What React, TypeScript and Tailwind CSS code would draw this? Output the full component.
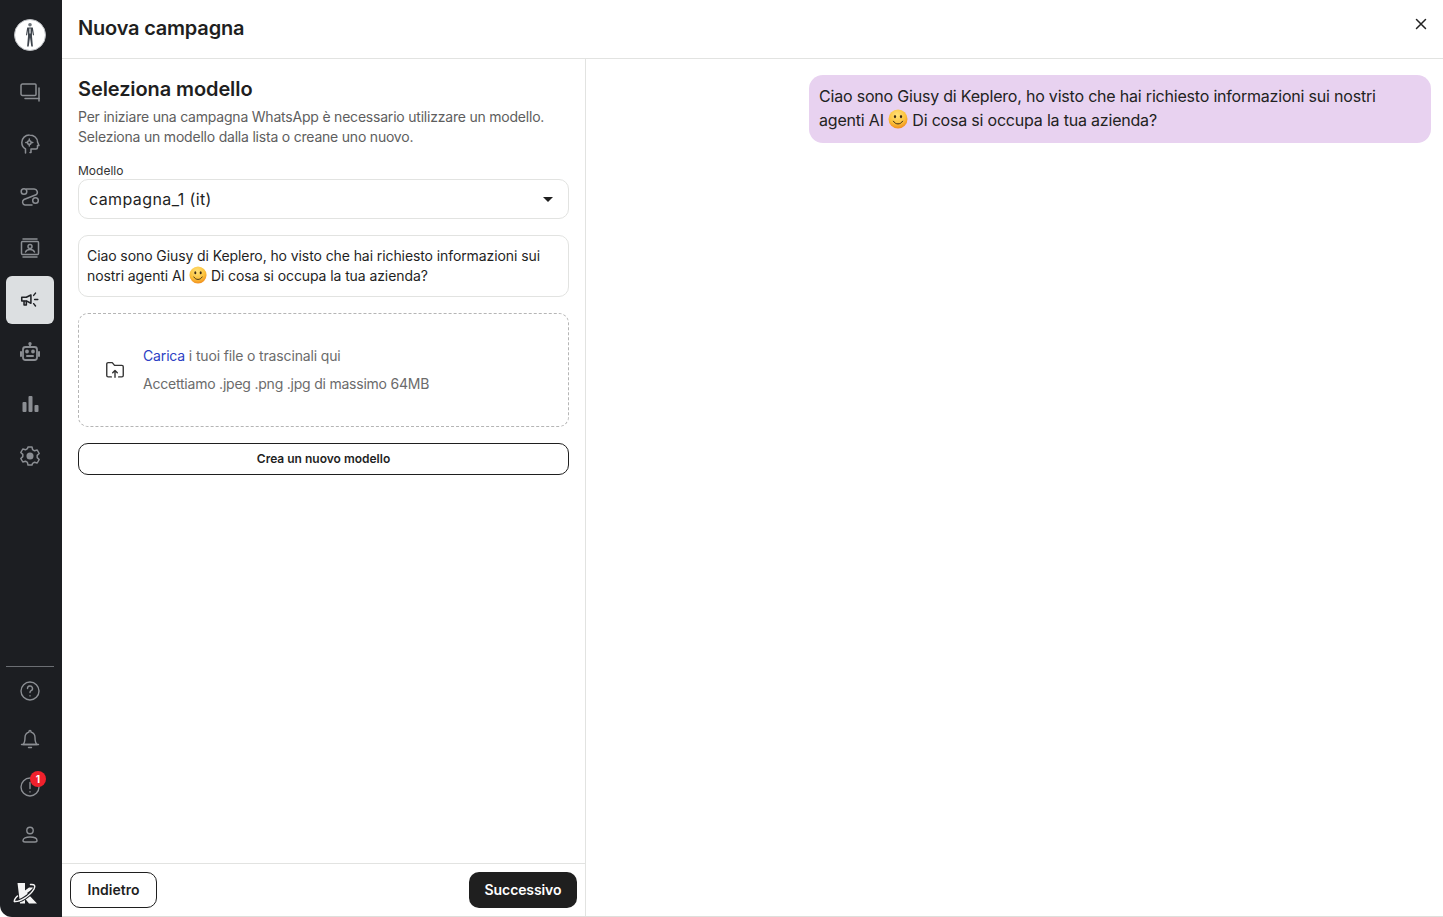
import React from "react";

const Ico = ({ children, size = 24, stroke = "#8b8e93", sw = 1.5 }: { children: React.ReactNode; size?: number; stroke?: string; sw?: number }) => (
  <svg width={size} height={size} viewBox="0 0 24 24" fill="none" stroke={stroke} strokeWidth={sw} strokeLinecap="round" strokeLinejoin="round">
    {children}
  </svg>
);

const Smile = ({ size = 18 }: { size?: number }) => (
  <svg width={size} height={size} viewBox="0 0 20 20" className="inline-block align-[-3px]">
    <defs>
      <radialGradient id="sm" cx="45%" cy="30%" r="75%">
        <stop offset="0%" stopColor="#ffe27a" />
        <stop offset="60%" stopColor="#fcc13a" />
        <stop offset="100%" stopColor="#ee8418" />
      </radialGradient>
    </defs>
    <circle cx="10" cy="10" r="9.5" fill="url(#sm)" />
    <ellipse cx="7" cy="7.6" rx="1.1" ry="1.7" fill="#3b2a14" />
    <ellipse cx="13" cy="7.6" rx="1.1" ry="1.7" fill="#3b2a14" />
    <path d="M5.4 12.2c1.2 1.9 2.8 2.7 4.6 2.7s3.4-.8 4.6-2.7" fill="none" stroke="#3b2a14" strokeWidth="1" strokeLinecap="round" />
  </svg>
);

const SideItem = ({ children, active = false }: { children: React.ReactNode; active?: boolean }) => (
  <div className={`w-12 h-12 flex items-center justify-center rounded-md ${active ? "bg-[#dcdfe1]" : ""}`}>{children}</div>
);

export default function App() {
  return (
    <div className="w-[1443px] h-[917px] flex overflow-hidden bg-white text-[#1f1f1f] font-['Inter','Liberation_Sans',sans-serif]">
      <aside className="w-[62px] h-full shrink-0 bg-[#1c1e22] flex flex-col items-center pr-[2px] rounded-bl-[12px] overflow-hidden">
        <div className="h-[68px] w-full flex items-center justify-center pt-[2px]">
          <div className="w-8 h-8 rounded-full bg-white border border-[#b9bcc0] flex items-center justify-center">
            <svg width="14" height="26" viewBox="0 0 14 26" fill="none">
              <circle cx="7" cy="2.800" r="1.800" fill="#6b7178" />
              <path d="M4.200 5.500h5.600L11 13l-1 .6-.8-5-.2 5.400.9 10.500H8.300L7 15.500 5.700 24.500H4.100L5 14 4.800 8.600l-.8 5-1-.6z" fill="#3f454d" />
              <path d="M6 6.500h2v5H6z" fill="#a6abb0" />
            </svg>
          </div>
        </div>
        <div className="flex flex-col gap-1">
          <SideItem>
            <Ico>
              <path d="M4.500 4h12.500a1 1 0 0 1 1 1v9.500a1 1 0 0 1-1 1H4.500a1.500 1.500 0 0 1-1.500-1.500V5.500A1.500 1.500 0 0 1 4.500 4z" />
              <path d="M7 18.500h14V8" />
              <path d="M21 18.500V21" />
            </Ico>
          </SideItem>
          <SideItem>
            <Ico>
              <path d="M7.500 21v-4C5 15.500 3.800 13 3.800 10.500A7.500 7.500 0 0 1 11.500 3c4.500 0 8 3 8 7l1.500 3.500h-1.500v2a1.500 1.500 0 0 1-1.500 1.500H13v3.500h-1" />
              <circle cx="11.300" cy="10.500" r="1.800" />
              <path d="M11.300 7v1.200M11.300 12.800V14M7.800 10.500H9M13.600 10.500h1.200" />
            </Ico>
          </SideItem>
          <SideItem>
            <Ico>
              <circle cx="6" cy="7.500" r="2.800" />
              <circle cx="17.500" cy="16.500" r="2.800" />
              <path d="M8.500 5h7.500a3.200 3.200 0 0 1 2 5.800L6 15.500a3 3 0 0 0 1 5.500h7" />
            </Ico>
          </SideItem>
          <SideItem>
            <Ico>
              <rect x="3.500" y="5.500" width="17" height="13" rx="1" />
              <path d="M5 3h14M5 21h14" />
              <circle cx="12" cy="10.500" r="2" />
              <path d="M7.500 16c.8-2 2.500-2.500 4.500-2.500s3.700.5 4.500 2.500" />
            </Ico>
          </SideItem>
          <SideItem active>
            <Ico stroke="#202226" size={22}>
              <path d="M3 9h5l5-2.500v9L8 13H3z" strokeWidth="1.700" />
              <path d="M5.500 13.500v4H8v-4" strokeWidth="1.700" />
              <path d="M17 11.500h3.500M16 7l2-2.500M16 16l2 2.500" strokeWidth="1.600" />
            </Ico>
          </SideItem>
          <SideItem>
            <Ico sw={1.8}>
              <rect x="5" y="7" width="14" height="13" rx="2.500" />
              <path d="M12 7V4.500" />
              <circle cx="12" cy="3.800" r="0.800" />
              <path d="M3 12v4M21 12v4M9 16h6" strokeWidth="2" />
              <circle cx="9" cy="11.500" r="1" fill="#8b8e93" />
              <circle cx="15" cy="11.500" r="1" fill="#8b8e93" />
            </Ico>
          </SideItem>
          <SideItem>
            <svg width="24" height="24" viewBox="0 0 24 24" fill="#8b8e93">
              <rect x="4.500" y="10" width="4" height="10" rx="1" />
              <rect x="10.500" y="4" width="4" height="16" rx="1" />
              <rect x="16.500" y="13" width="4" height="7" rx="1" />
            </svg>
          </SideItem>
          <SideItem>
            <Ico>
              <path d="M10 3h4l.6 2.700 1.900 1.100 2.700-.8 2 3.500-2 1.900v2.200l2 1.900-2 3.500-2.700-.8-1.900 1.100L14 21h-4l-.6-2.700-1.900-1.100-2.700.8-2-3.500 2-1.900v-2.200l-2-1.900 2-3.500 2.700.8 1.900-1.100z" />
              <circle cx="12" cy="12" r="2.800" fill="#8b8e93" />
            </Ico>
          </SideItem>
        </div>

        <div className="mt-auto w-12 border-t border-[#6b6e73]" />
        <SideItem>
          <Ico sw={1.4}>
            <circle cx="12" cy="12" r="9" />
            <path d="M9.500 9.500a2.500 2.500 0 1 1 3.600 2.200c-.8.400-1.100 1-1.100 1.800" />
            <path d="M12 16.800v.1" />
          </Ico>
        </SideItem>
        <SideItem>
          <Ico sw={1.4}>
            <path d="M12 3.500a1 1 0 0 1 1 1v.6a5.500 5.500 0 0 1 4 5.400c0 3.500.5 5.500 2 7H5c1.500-1.500 2-3.500 2-7a5.500 5.500 0 0 1 4-5.400v-.6a1 1 0 0 1 1-1z" />
            <path d="M3.500 17.500h17M10.500 20.500h3" />
          </Ico>
        </SideItem>
        <div className="relative">
          <SideItem>
            <Ico sw={1.4}>
              <circle cx="12" cy="12" r="9" />
              <path d="M12 7.500v6M12 16.800v.1" />
            </Ico>
          </SideItem>
          <div className="absolute left-[24px] top-[8px] w-4 h-4 rounded-full bg-[#f0212c] text-white text-[10px] font-bold flex items-center justify-center">1</div>
        </div>
        <SideItem>
          <Ico sw={1.4}>
            <circle cx="12" cy="7.500" r="3.200" />
            <path d="M5 17.500c0-2.200 3-3.500 7-3.500s7 1.300 7 3.500c0 1.200-.8 1.500-2 1.500H7c-1.200 0-2-.3-2-1.500z" />
          </Ico>
        </SideItem>
        <div className="h-[58px] w-full flex items-center justify-center pt-[10px] pr-[8px]">
          <svg width="26" height="24" viewBox="0 0 26 24" fill="none">
            <path d="M4.500 2h7.500v7.500l4-3h5.500L14 12l10 10.500h-8L12 17.500v5H7z" fill="#f4f4f4" />
            <path d="M1.500 20.500C7 21 17 15 21 8c1.500-3 1-5-3.500-4.500" stroke="#1c1e22" strokeWidth="3.400" strokeLinecap="round" />
            <path d="M1.500 20.500C7 21 17 15 21 8c1.500-3 1-5-3.500-4.500" stroke="#f4f4f4" strokeWidth="1.500" strokeLinecap="round" />
            <path d="M1.500 20.500c-.6-1.200 1-3.500 3-5.500" stroke="#f4f4f4" strokeWidth="1.500" strokeLinecap="round" />
          </svg>
        </div>
      </aside>

      <div className="flex-1 min-w-0 flex flex-col border-b border-[#dedfdb]">
        <header className="h-[59px] shrink-0 border-b border-[#e2e3e1] flex items-start justify-between pl-4 pr-[15px]">
          <h1 className="text-[20px] leading-[28px] font-semibold mt-[14px] tracking-[-0.2px]">Nuova campagna</h1>
          <svg width="14" height="14" viewBox="0 0 14 14" fill="none" stroke="#222" strokeWidth="1.500" strokeLinecap="round" className="mt-[17px]">
            <path d="M2.500 2.500l9 9M11.500 2.500l-9 9" />
          </svg>
        </header>
        <div className="flex-1 min-h-0 flex">
          <section className="w-[524px] shrink-0 border-r border-[#e2e3e1] flex flex-col">
            <div className="flex-1 px-4 pt-[17px]">
              <h2 className="text-[20px] leading-[26px] font-semibold tracking-[-0.1px]">Seleziona modello</h2>
              <p className="text-[14px] leading-[20px] text-[#5e5e5e] mt-[5px] tracking-[-0.21px]">
                Per iniziare una campagna WhatsApp è necessario utilizzare un modello.
                <br />
                Seleziona un modello dalla lista o creane uno nuovo.
              </p>
              <div className="text-[12px] leading-[16px] text-[#333] mt-[16px]">Modello</div>
              <div className="h-10 rounded-[10px] border border-[#e2e3e1] flex items-center justify-between pl-[10px] pr-[15px]">
                <span className="text-[16px] tracking-[0.4px]">campagna_1 (it)</span>
                <span className="w-0 h-0 border-x-[5px] border-x-transparent border-t-[5px] border-t-[#1f1f1f]" />
              </div>
              <div className="mt-4 h-[62px] rounded-[10px] border border-[#e2e3e1] px-2 pt-[10px] text-[14px] leading-[20px] tracking-[-0.09px]">
                Ciao sono Giusy di Keplero, ho visto che hai richiesto informazioni sui
                <br />
                nostri agenti AI <Smile /> Di cosa si occupa la tua azienda?
              </div>
              <div className="mt-4 h-[114px] rounded-[10px] border border-dashed border-[#b5b5b5] flex items-center pl-[25px] gap-[17px]">
                <Ico size={22} stroke="#333" sw={1.5}>
                  <path d="M8 19.500H4.500A1.500 1.500 0 0 1 3 18V5.500A1.500 1.500 0 0 1 4.500 4H9l2.500 3h8A1.500 1.500 0 0 1 21 8.500V18a1.500 1.500 0 0 1-1.500 1.500H16" />
                  <path d="M12 20v-7M9.500 15l2.500-2.500 2.500 2.500" />
                </Ico>
                <div className="text-[14px] leading-[20px] text-[#6b6b6b] tracking-[-0.15px]">
                  <div>
                    <span className="text-[#2d3fc4]">Carica</span> i tuoi file o trascinali qui
                  </div>
                  <div className="mt-2 tracking-[-0.22px]">Accettiamo .jpeg .png .jpg di massimo 64MB</div>
                </div>
              </div>
              <button className="mt-4 w-full h-8 rounded-[10px] border border-[#1f1f1f] bg-white text-[12px] font-semibold text-[#1f1f1f]">
                Crea un nuovo modello
              </button>
            </div>
            <footer className="h-[53px] shrink-0 border-t border-[#e2e3e1] flex items-center justify-between px-2">
              <button className="w-[87px] h-9 rounded-[10px] border border-[#1f1f1f] bg-white text-[14px] font-semibold leading-[20px] pb-[1px]">Indietro</button>
              <button className="w-[108px] h-9 rounded-[10px] bg-[#1f1f1f] text-white text-[14px] font-semibold leading-[20px] pb-[1px] tracking-[-0.1px]">Successivo</button>
            </footer>
          </section>
          <section className="flex-1 min-w-0 flex justify-end items-start pt-4 pr-3">
            <div className="w-[622px] h-[68px] rounded-[14px] bg-[#e8d2f0] pl-[10px] pr-3 pt-[9px] text-[16px] leading-[24px] text-[#222] tracking-[-0.2px]">
              Ciao sono Giusy di Keplero, ho visto che hai richiesto informazioni sui nostri
              <br />
              agenti AI <Smile size={20} /> Di cosa si occupa la tua azienda?
            </div>
          </section>
        </div>
      </div>
    </div>
  );
}
